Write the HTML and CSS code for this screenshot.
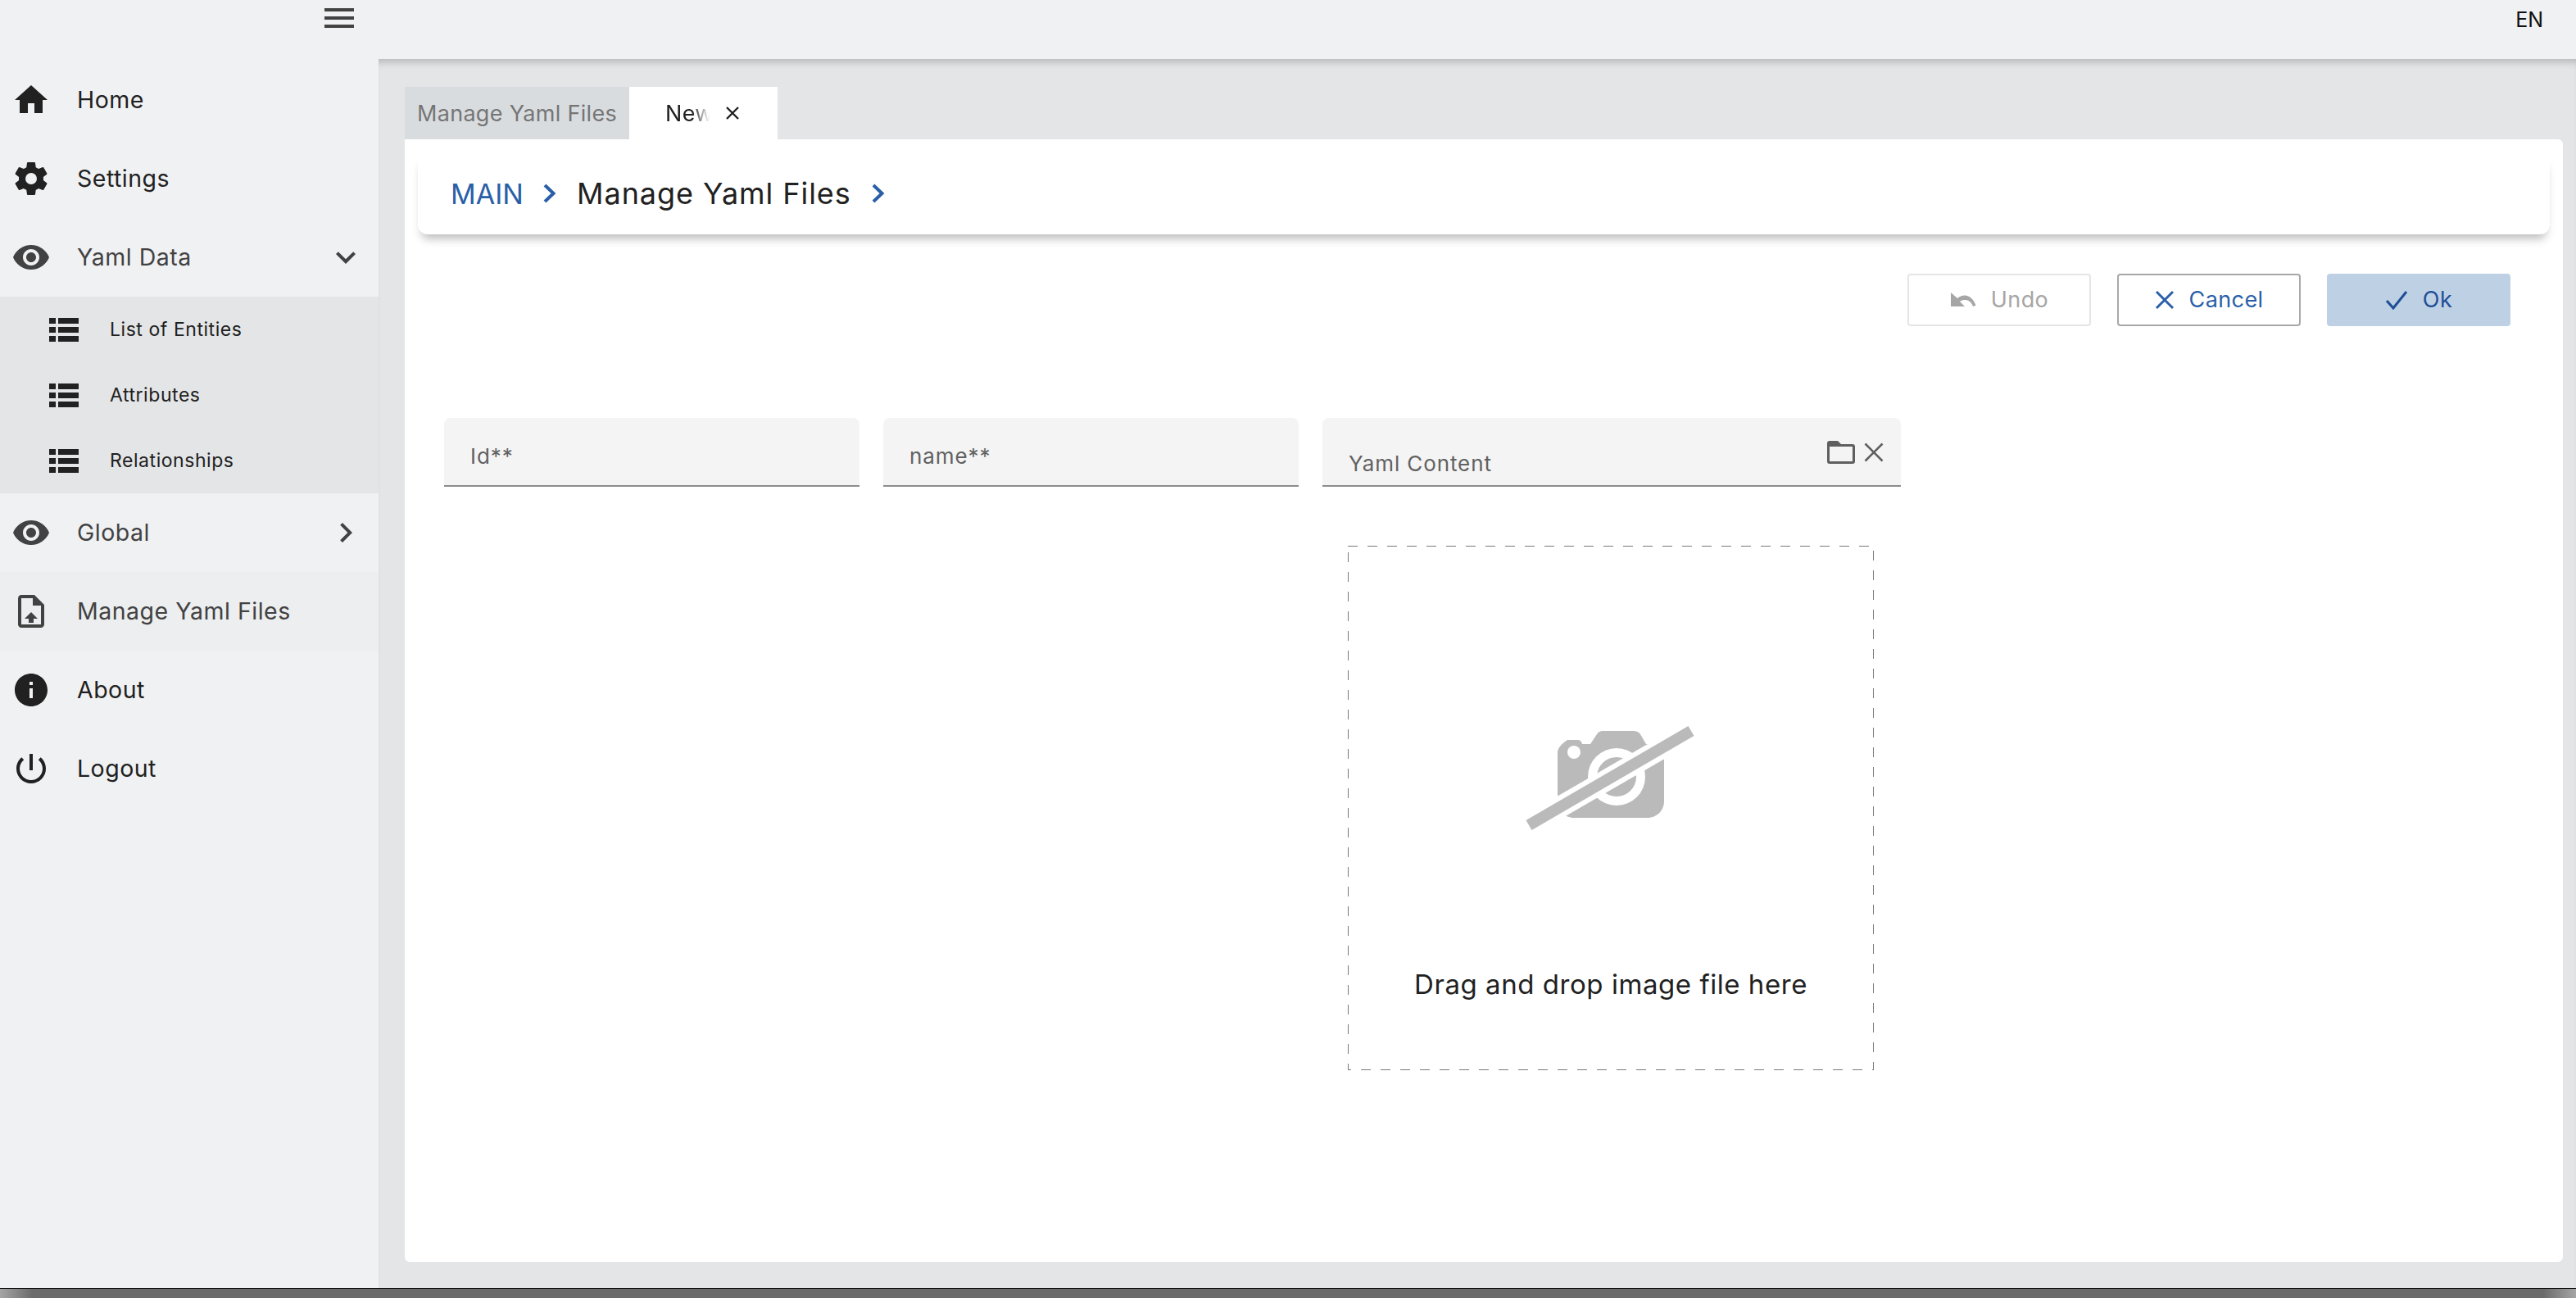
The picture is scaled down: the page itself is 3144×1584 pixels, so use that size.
FILE: index.html
```html
<!DOCTYPE html>
<html lang="en">
<head>
<meta charset="utf-8">
<title>Manage Yaml Files</title>
<link rel="stylesheet" href="styles.css">
</head>
<body>
<div class="app">
  <header class="topbar">
    <div class="brand"><div class="burger"><i></i><i></i><i></i></div></div>
    <div class="lang">EN</div>
  </header>
  <div class="body">
    <nav class="sidebar">
      <a class="item dark"><svg class="ico" viewBox="0 0 24 24"><path d="M10 20v-6h4v6h5v-8h3L12 3 2 12h3v8z"/></svg><span>Home</span></a>
      <a class="item dark"><svg class="ico" viewBox="0 0 24 24"><path fill-rule="evenodd" d="M12,15.5A3.5,3.5 0 0,1 8.5,12A3.5,3.5 0 0,1 12,8.5A3.5,3.5 0 0,1 15.5,12A3.5,3.5 0 0,1 12,15.5M19.43,12.97C19.47,12.65 19.5,12.33 19.5,12C19.5,11.67 19.47,11.34 19.43,11L21.54,9.37C21.73,9.22 21.78,8.95 21.66,8.73L19.66,5.27C19.54,5.05 19.27,4.96 19.05,5.05L16.56,6.05C16.04,5.66 15.5,5.32 14.87,5.07L14.5,2.42C14.46,2.18 14.25,2 14,2H10C9.75,2 9.54,2.18 9.5,2.42L9.13,5.07C8.5,5.32 7.96,5.66 7.44,6.05L4.95,5.05C4.73,4.96 4.46,5.05 4.34,5.27L2.34,8.73C2.21,8.95 2.27,9.22 2.46,9.37L4.57,11C4.53,11.34 4.5,11.67 4.5,12C4.5,12.33 4.53,12.65 4.57,12.97L2.46,14.63C2.27,14.78 2.21,15.05 2.34,15.27L4.34,18.73C4.46,18.95 4.73,19.03 4.95,18.95L7.44,17.94C7.96,18.34 8.5,18.68 9.13,18.93L9.5,21.58C9.54,21.82 9.75,22 10,22H14C14.25,22 14.46,21.82 14.5,21.58L14.87,18.93C15.5,18.67 16.04,18.34 16.56,17.94L19.05,18.95C19.27,19.03 19.54,18.95 19.66,18.73L21.66,15.27C21.78,15.05 21.73,14.78 21.54,14.63L19.43,12.97Z"/></svg><span>Settings</span></a>
      <a class="item"><svg class="ico" viewBox="0 0 24 24"><path d="M12 4.5C7 4.5 2.73 7.61 1 12c1.73 4.39 6 7.5 11 7.5s9.27-3.11 11-7.5c-1.73-4.39-6-7.5-11-7.5zM12 17c-2.76 0-5-2.24-5-5s2.24-5 5-5 5 2.24 5 5-2.24 5-5 5zm0-8c-1.66 0-3 1.34-3 3s1.34 3 3 3 3-1.34 3-3-1.34-3-3-3z"/></svg><span class="grow">Yaml Data</span><svg class="ico caret" viewBox="0 0 24 24"><path d="M16.59 8.59L12 13.17 7.41 8.59 6 10l6 6 6-6z"/></svg></a>
      <div class="sub">
        <a class="subitem"><svg class="listico" viewBox="0 0 36 29"><path d="M0 0h8v7H0zM11 0h25v7H11zM0 11h8v7H0zM11 11h25v7H11zM0 22h8v7H0zM11 22h25v7H11z"/></svg><span>List of Entities</span></a>
        <a class="subitem"><svg class="listico" viewBox="0 0 36 29"><path d="M0 0h8v7H0zM11 0h25v7H11zM0 11h8v7H0zM11 11h25v7H11zM0 22h8v7H0zM11 22h25v7H11z"/></svg><span>Attributes</span></a>
        <a class="subitem"><svg class="listico" viewBox="0 0 36 29"><path d="M0 0h8v7H0zM11 0h25v7H11zM0 11h8v7H0zM11 11h25v7H11zM0 22h8v7H0zM11 22h25v7H11z"/></svg><span>Relationships</span></a>
      </div>
      <a class="item"><svg class="ico" viewBox="0 0 24 24"><path d="M12 4.5C7 4.5 2.73 7.61 1 12c1.73 4.39 6 7.5 11 7.5s9.27-3.11 11-7.5c-1.73-4.39-6-7.5-11-7.5zM12 17c-2.76 0-5-2.24-5-5s2.24-5 5-5 5 2.24 5 5-2.24 5-5 5zm0-8c-1.66 0-3 1.34-3 3s1.34 3 3 3 3-1.34 3-3-1.34-3-3-3z"/></svg><span class="grow">Global</span><svg class="ico caret" viewBox="0 0 24 24"><path d="M10 6L8.59 7.41 13.17 12l-4.58 4.59L10 18l6-6z"/></svg></a>
      <a class="item active"><svg class="ico" viewBox="0 0 24 24"><path d="M14 2H6c-1.1 0-1.99.9-1.99 2L4 20c0 1.1.89 2 1.99 2H18c1.1 0 2-.9 2-2V8l-6-6zm4 18H6V4h7v4.5L18 8.5V20zM8 16.5h2.5V19h3v-2.500H16l-4-4z"/></svg><span>Manage Yaml Files</span></a>
      <a class="item dark"><svg class="ico" viewBox="0 0 24 24"><path d="M12 2C6.48 2 2 6.48 2 12s4.48 10 10 10 10-4.48 10-10S17.52 2 12 2zm1 15h-2v-6h2v6zm0-8h-2V7h2v2z"/></svg><span>About</span></a>
      <a class="item dark"><svg class="ico" viewBox="0 0 24 24"><path d="M13 3h-2v10h2V3zm4.830 2.170l-1.420 1.420C17.990 7.860 19 9.810 19 12c0 3.870-3.130 7-7 7s-7-3.130-7-7c0-2.190 1.010-4.140 2.580-5.420L6.170 5.170C4.230 6.820 3 9.260 3 12c0 4.970 4.030 9 9 9s9-4.030 9-9c0-2.740-1.230-5.180-3.170-6.830z"/></svg><span>Logout</span></a>
    </nav>
    <main class="main">
      <div class="tabs">
        <div class="tab">Manage Yaml Files</div>
        <div class="tab current"><span class="tabname">New</span><svg class="tabx" viewBox="0 0 16 16"><path d="M1 1l14 14M15 1L1 15"/></svg></div>
      </div>
      <section class="panel">
        <div class="crumbs">
          <span class="crumb-link">MAIN</span>
          <svg class="crumb-sep" viewBox="0 0 17 24"><path d="M3 2l10.500 10L3 22"/></svg>
          <span class="crumb-cur">Manage Yaml Files</span>
          <svg class="crumb-sep" viewBox="0 0 17 24"><path d="M3 2l10.500 10L3 22"/></svg>
        </div>
        <div class="toolbar">
          <button class="btn undo"><svg class="undoico" viewBox="0 0 32 24"><path d="M1 3v17h17l-6-6c2-1.500 4-2 6-2 4.500 0 8 2.500 10 8l3.500-1.200C29 11.500 24 6.500 18 6.500c-3.500 0-6.500 1.200-9 3.500z"/></svg><span>Undo</span></button>
          <button class="btn cancel"><svg class="xico" viewBox="0 0 24 24"><path d="M2 2l20 20M22 2L2 22"/></svg><span>Cancel</span></button>
          <button class="btn ok"><svg class="checkico" viewBox="0 0 28 24"><path d="M2 13l8 9L26 2"/></svg><span>Ok</span></button>
        </div>
        <div class="form">
          <div class="field"><span>Id**</span></div>
          <div class="field"><span>name**</span></div>
          <div class="upload">
            <div class="field yaml">
              <span>Yaml Content</span>
              <div class="field-icons">
                <svg class="folder" viewBox="0 0 34 28"><path d="M3 0h10l4 4h14a3 3 0 0 1 3 3v18a3 3 0 0 1-3 3H3a3 3 0 0 1-3-3V3a3 3 0 0 1 3-3zm0 7v18h28V7z" fill-rule="evenodd"/></svg>
                <svg class="clear" viewBox="0 0 24 24"><path d="M1.500 1.500l21 21M22.500 1.500l-21 21"/></svg>
              </div>
            </div>
            <div class="dropzone">
              <svg class="camera" viewBox="0 0 206 130">
                <g class="camera-g">
                  <path d="M38 34c0-7 6-12 12-16h12c3 0 5 1 6 5h10l8-12c2-3 4-4 7-4h38c3 0 6 1 8 4l7 12h8c8 0 14 5 14 14v56c0 11-9 20-20 20H58c-11 0-20-9-20-20z"/>
                  <circle class="hole" cx="58" cy="33" r="8"/>
                  <circle class="hole" cx="110" cy="63" r="35"/>
                  <circle cx="110" cy="63" r="24"/>
                  <path class="slash-gap" d="M-6 127L210 2"/>
                  <path class="slash" d="M3 122L201 7"/>
                </g>
              </svg>
              <p class="drop-text">Drag and drop image file here</p>
            </div>
          </div>
        </div>
      </section>
    </main>
  </div>
  <footer class="footer"></footer>
</div>
</body>
</html>
```
FILE: styles.css
```css
* { box-sizing: border-box; }
html, body { margin: 0; padding: 0; }
body { font-family: Inter, "Noto Sans", "Liberation Sans", sans-serif; color: #212121; background: #e4e5e7; }
.app { width: 3144px; height: 1584px; display: flex; flex-direction: column; overflow: hidden; }

.topbar { height: 72px; flex: none; background: #f0f1f3; display: flex; justify-content: space-between; position: relative; z-index: 2; }
.brand { width: 462px; padding: 10px 30px 0 0; display: flex; justify-content: flex-end; }
.burger { width: 36px; height: 24px; display: flex; flex-direction: column; justify-content: space-between; }
.burger i { display: block; height: 4px; background: #424242; }
.lang { padding: 10px 40px 0 0; font-size: 25px; line-height: 28px; color: #111; }

.body { flex: 1; display: flex; min-height: 0; }
.sidebar { width: 462px; flex: none; background: #f0f1f3; padding-top: 2px; }
.item { height: 96px; display: flex; align-items: center; padding-left: 14px; color: #424242; font-size: 28.500px; letter-spacing: .5px; line-height: 34px; }
.item span { margin-top: -1px; }
.item.dark { color: #212121; fill: #212121; }
.item.active { background: #eceef0; }
.ico { width: 48px; height: 48px; flex: none; fill: currentColor; margin-right: 32px; }
.grow { flex: 1; }
.caret { margin-right: 16px; }
.sub { background: #e4e5e7; }
.subitem { height: 80px; display: flex; align-items: center; padding-left: 60px; font-size: 23px; letter-spacing: .55px; color: #212121; }
.listico { width: 36px; height: 29px; fill: #212121; margin-right: 38px; flex: none; }

.main { flex: 1; min-width: 0; padding: 34px 16px 32px 32px; display: flex; flex-direction: column; box-shadow: inset 0 10px 10px -6px rgba(0,0,0,.2); }
.tabs { height: 64px; display: flex; flex: none; }
.tab { width: 274px; background: #d9dcdf; color: #757575; font-size: 27px; letter-spacing: .3px; display: flex; align-items: center; justify-content: center; }
.tab.current { width: 181px; background: #fff; color: #212121; justify-content: flex-start; padding-left: 44px; }
.tabname { display: block; width: 54px; -webkit-mask-image: linear-gradient(90deg, #000 60%, transparent 100%); mask-image: linear-gradient(90deg, #000 60%, transparent 100%); }
.tabx { width: 16px; height: 16px; margin-left: 20px; fill: none; stroke: #212121; stroke-width: 2.4; }

.panel { flex: 1; background: #fff; padding: 16px; border-radius: 0 6px 6px 6px; display: flex; flex-direction: column; }
.crumbs { height: 100px; flex: none; border-radius: 12px; box-shadow: 0 10px 12px -5px rgba(0,0,0,.28); padding-left: 40px; display: flex; align-items: center; font-size: 36px; }
.crumb-link { color: #2a5fa8; font-size: 34px; width: 86px; }
.crumb-cur { color: #212121; letter-spacing: .95px; margin: 0 24px 0 25px; }
.crumb-sep { width: 17px; height: 24px; fill: none; stroke: #2a5fa8; stroke-width: 4; margin-left: 26px; }
.crumb-cur + .crumb-sep { margin-left: 0; }

.toolbar { display: flex; justify-content: flex-end; gap: 32px; margin-top: 48px; padding-right: 48px; }
.btn { width: 224px; height: 64px; border-radius: 4px; background: #fff; font: inherit; font-size: 27px; letter-spacing: .4px; line-height: 32px; display: flex; align-items: center; justify-content: center; gap: 18px; padding: 0; }
.btn span { margin-top: -1px; }
.undo { border: 2px solid #e5e5e5; color: #a6a6a6; }
.cancel { border: 2px solid #a8a8a8; color: #2a5fa8; }
.ok { border: 0; background: #bdd0e4; color: #1f4e96; }
.undoico { width: 32px; height: 24px; fill: #a6a6a6; }
.xico { width: 24px; height: 24px; fill: none; stroke: #2a5fa8; stroke-width: 3; }
.checkico { width: 28px; height: 24px; fill: none; stroke: #1f4e96; stroke-width: 3; }

.form { display: grid; grid-template-columns: 507px 507px 706px; column-gap: 29px; margin-top: 112px; padding-left: 32px; align-items: start; }
.field { height: 84px; background: #f4f4f4; border-bottom: 2px solid #8c8c8c; border-radius: 8px 8px 0 0; padding: 32px 32px 0; font-size: 26px; letter-spacing: .9px; line-height: 30px; color: #616161; }
.yaml { position: relative; padding-top: 41px; }
.field-icons { position: absolute; right: 21px; top: 28px; display: flex; align-items: center; gap: 11px; }
.folder { width: 34px; height: 28px; fill: #5f5f5f; }
.clear { width: 24px; height: 24px; fill: none; stroke: #5f5f5f; stroke-width: 2.6; }
.upload { display: flex; flex-direction: column; }
.dropzone {
  width: 642px; height: 640px; margin: 72px 0 0 31px; padding-top: 219px; display: flex; flex-direction: column; align-items: center;
  background:
    repeating-linear-gradient(90deg, #7a7a7a 0 12px, transparent 12px 24px) top left / 100% 1px no-repeat,
    repeating-linear-gradient(90deg, #7a7a7a 0 4px, transparent 4px 16px, #7a7a7a 16px 24px) bottom left / 100% 1px no-repeat,
    repeating-linear-gradient(180deg, transparent 0 8px, #7a7a7a 8px 20px, transparent 20px 24px) top left / 1px 100% no-repeat,
    repeating-linear-gradient(180deg, transparent 0 6px, #7a7a7a 6px 18px, transparent 18px 24px) top right / 1px 100% no-repeat;
}
.camera { width: 206px; height: 130px; display: block; overflow: visible; }
.camera-g { fill: #bababa; filter: blur(.6px); }
.hole { fill: #fff; }
.slash-gap { fill: none; stroke: #fff; stroke-width: 26; }
.slash { fill: none; stroke: #bababa; stroke-width: 14; }
.drop-text { margin: 166px 0 0; font-size: 33px; letter-spacing: .55px; line-height: 40px; color: #212121; }
.footer { height: 12px; flex: none; border-top: 1px solid #000; background: linear-gradient(90deg, #a5a5a5 0, #6b6b6b 40px, #6b6b6b calc(100% - 40px), #a5a5a5 100%); }
```
